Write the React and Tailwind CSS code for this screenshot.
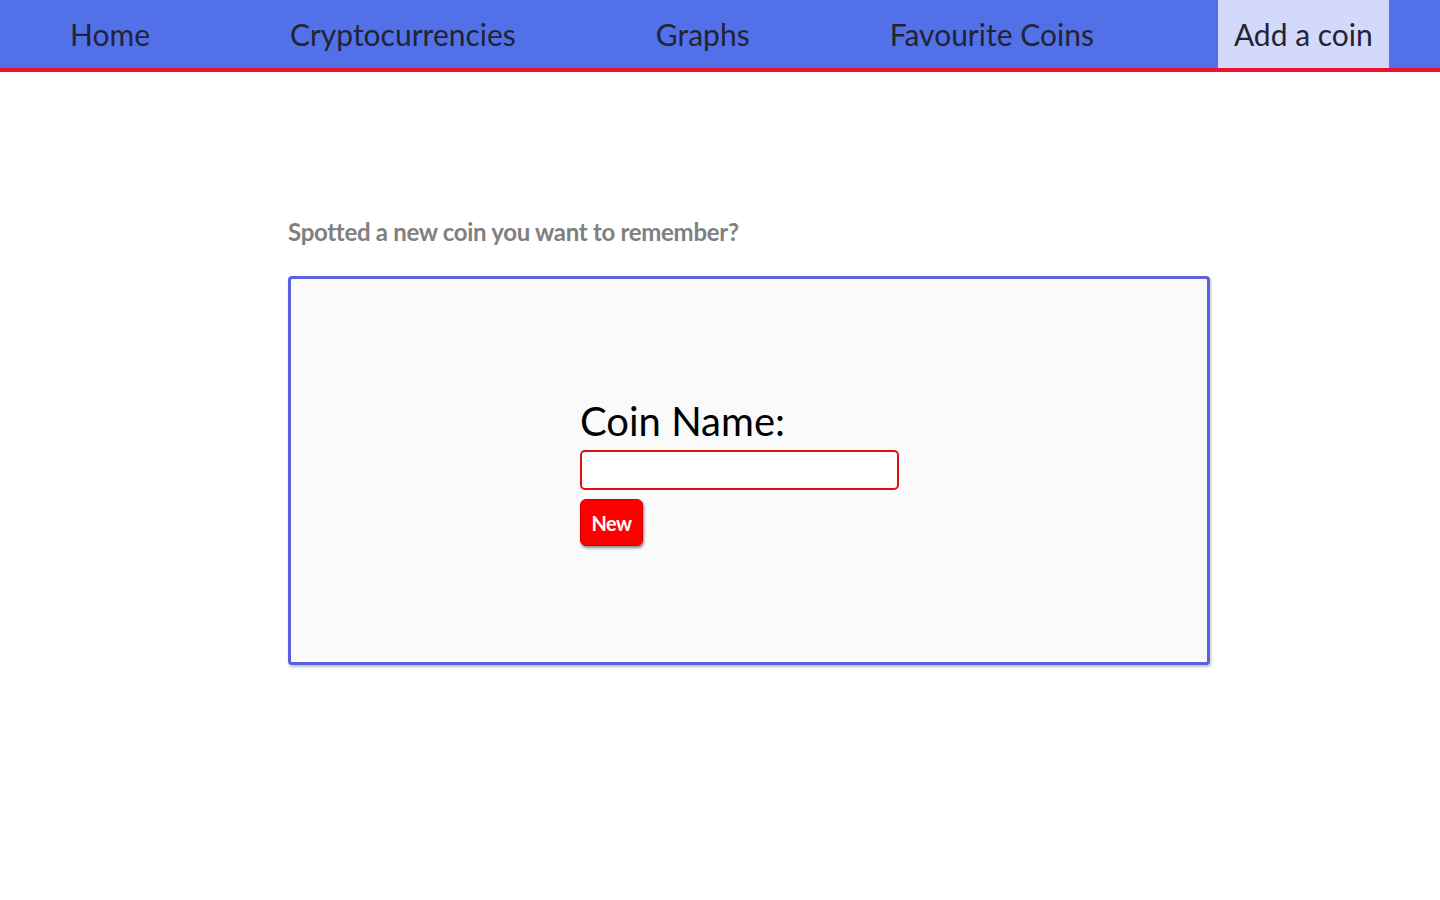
import React, { useState } from "react";

export default function App() {
  const [coin, setCoin] = useState("");
  const links = ["Home", "Cryptocurrencies", "Graphs", "Favourite Coins", "Add a coin"];

  return (
    <div className="min-h-screen bg-white" style={{ fontFamily: "Lato, 'Open Sans', sans-serif" }}>
      {/* Nav bar */}
      <nav className="h-[72px] bg-[#5271e9] border-b-4 border-[#f00f2f] overflow-hidden">
        <ul className="flex h-full">
          {links.map((l, i) => (
            <li
              key={l}
              className={`mx-[54px] px-4 shrink-0 whitespace-nowrap flex items-center text-[30px] text-[#222433] ${
                i === 4 ? "bg-[#d3d9fa]" : ""
              }`}
            >
              {l}
            </li>
          ))}
        </ul>
      </nav>

      <main className="w-[922px] ml-[288px] pt-[144px]">
        <p className="text-[24px] font-bold text-[#808080] tracking-[-0.3px] leading-8">
          Spotted a new coin you want to remember?
        </p>

        <div className="mt-[28px] h-[389px] border-[3px] border-[#5b60e0] rounded-[4px] bg-[#fafafa] shadow-[1px_2px_3px_rgba(0,0,0,0.25)] pl-[289px] pt-[118px]">
          <label className="block text-[40px] leading-[48px] text-black">Coin Name:</label>
          <input
            type="text"
            value={coin}
            onChange={(e) => setCoin(e.target.value)}
            className="mt-[5px] block w-[319px] h-[40px] bg-white border-2 border-[#dd0f14] rounded-[5px] px-2 outline-none"
          />
          <button
            type="button"
            className="mt-[9px] block w-[63px] h-[47px] bg-[#fe0000] text-white font-bold text-[20px] rounded-[6px] border border-[#d40000] shadow-[1px_2px_3px_rgba(0,0,0,0.45)] tracking-[-0.5px]"
          >
            New
          </button>
        </div>
      </main>
    </div>
  );
}
